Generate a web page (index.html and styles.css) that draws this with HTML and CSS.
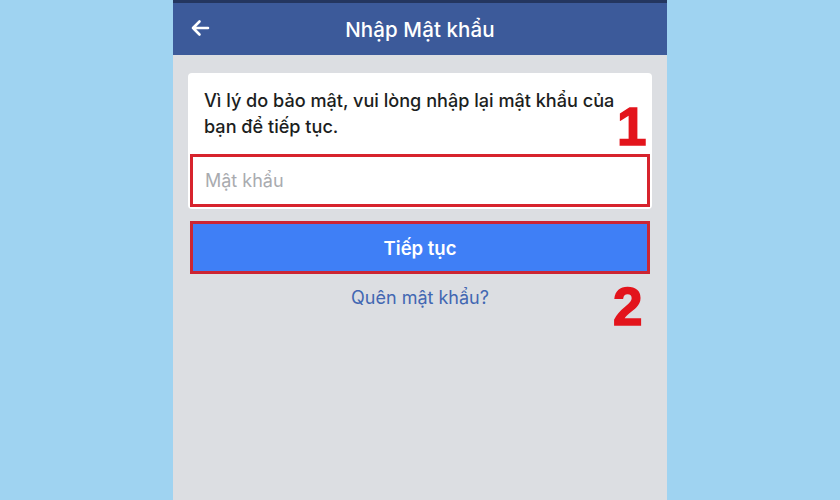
FILE: index.html
```html
<!DOCTYPE html>
<html lang="vi">
<head>
<meta charset="utf-8">
<title>Nhập Mật khẩu</title>
<link rel="stylesheet" href="styles.css">
</head>
<body>
<div class="stage">
  <div class="phone">
    <header class="topbar">
      <span class="back">
        <svg width="20" height="18" viewBox="0 0 20 18" aria-hidden="true">
          <path d="M18 9H3M9.5 2.5L3 9l6.5 6.5" fill="none" stroke="#fff" stroke-width="2.6" stroke-linecap="round" stroke-linejoin="round"/>
        </svg>
      </span>
      <h1 class="title">Nhập Mật khẩu</h1>
    </header>
    <main class="content">
      <section class="card">
        <p class="message">Vì lý do bảo mật, vui lòng nhập lại mật khẩu của bạn để tiếp tục.</p>
        <div class="field">Mật khẩu</div>
      </section>
      <button class="continue">Tiếp tục</button>
      <a class="forgot" href="#">Quên mật khẩu?</a>
    </main>
    <span class="step step-1">1</span>
    <span class="step step-2">2</span>
  </div>
</div>
</body>
</html>
```

FILE: styles.css
```css
html, body {
  margin: 0;
  padding: 0;
}
body {
  width: 840px;
  height: 500px;
  overflow: hidden;
  background: #9fd3f1;
  font-family: "Inter", "Roboto", "Liberation Sans", sans-serif;
}
.stage {
  display: flex;
  justify-content: center;
  height: 500px;
}
.phone {
  position: relative;
  width: 494px;
  height: 500px;
  background: #dcdee2;
  display: flex;
  flex-direction: column;
}
.topbar {
  height: 52px;
  border-top: 3px solid #24365f;
  background: #3c5a9a;
  display: flex;
  align-items: center;
  justify-content: center;
  position: relative;
}
.back {
  position: absolute;
  left: 17px;
  top: 16px;
  display: flex;
}
.title {
  margin: 0;
  color: #ffffff;
  font-size: 20.5px;
  font-weight: 500;
  letter-spacing: 0.1px;
}
.content {
  padding: 18px 15px 0;
  display: flex;
  flex-direction: column;
  align-items: stretch;
}
.card {
  background: #ffffff;
  border-radius: 4px;
  padding: 14px 0 2px;
}
.message {
  margin: 0 20px 15px 16px;
  font-size: 18.1px;
  line-height: 26px;
  font-weight: 500;
  color: #1c1e21;
}
.field {
  margin: 0 2px;
  height: 47px;
  border: 3px solid #d7232d;
  padding-left: 12px;
  display: flex;
  align-items: center;
  font-size: 18px;
  color: #a9abaf;
}
.continue {
  margin: 12px 2px 0;
  height: 53px;
  border: 3px solid #cc2533;
  background: #3f7ff6;
  color: #ffffff;
  font-family: inherit;
  font-size: 18.5px;
  font-weight: 600;
  padding: 0;
}
.forgot {
  margin-top: 13px;
  text-align: center;
  font-size: 18px;
  line-height: 22px;
  color: #4267b2;
  text-decoration: none;
}
.step {
  position: absolute;
  color: #e3141c;
  font-family: "Liberation Sans", Arial, sans-serif;
  font-weight: 700;
  font-size: 53px;
  line-height: 38px;
  -webkit-text-stroke: 1.5px #e3141c;
}
.step-1 {
  left: 444px;
  top: 108px;
}
.step-2 {
  left: 440px;
  top: 288px;
}
```
